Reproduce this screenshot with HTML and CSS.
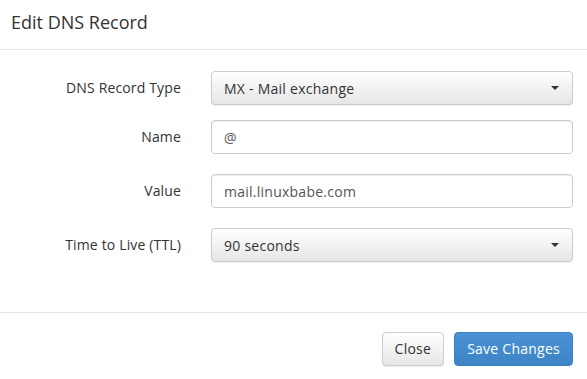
FILE: index.html
```html
<!DOCTYPE html>
<html lang="en">
<head>
  <meta charset="UTF-8">
  <meta name="viewport" content="width=device-width, initial-scale=1.0">
  <title>Edit DNS Record</title>
  <link rel="stylesheet" href="styles.css">
</head>
<body>
  <div class="modal">
    <div class="modal-header">
      <h4 class="modal-title">Edit DNS Record</h4>
    </div>

    <div class="modal-body">
      <form class="record-form">
        <div class="form-group">
          <label for="recordType">DNS Record Type</label>
          <button type="button" id="recordType" class="select-btn">
            <span>MX - Mail exchange</span>
            <span class="caret"></span>
          </button>
        </div>
        <div class="form-group">
          <label for="recordName">Name</label>
          <input type="text" id="recordName" class="form-control" value="@">
        </div>
        <div class="form-group">
          <label for="recordValue">Value</label>
          <input type="text" id="recordValue" class="form-control" value="mail.linuxbabe.com">
        </div>
        <div class="form-group">
          <label for="recordTtl">Time to Live (TTL)</label>
          <button type="button" id="recordTtl" class="select-btn">
            <span>90 seconds</span>
            <span class="caret"></span>
          </button>
        </div>
      </form>
    </div>

    <div class="modal-footer">
      <button type="button" class="btn btn-default">Close</button>
      <button type="button" class="btn btn-primary">Save Changes</button>
    </div>
  </div>
</body>
</html>
```

FILE: styles.css
```css
* {
  box-sizing: border-box;
}

body {
  font-family: "Open Sans", "Liberation Sans", sans-serif;
  font-size: 14px;
  color: #333;
  margin: 0;
  padding: 0;
  background-color: #fff;
}

.modal {
  width: 587px;
  height: 379px;
  background-color: #fff;
}

.modal-header {
  padding: 9px 11px 14px;
  border-bottom: 1px solid #e5e5e5;
}

.modal-title {
  margin: 0;
  font-size: 18px;
  font-weight: 400;
  line-height: 26px;
  color: #333;
}

.modal-body {
  padding: 21px 14px 50px 0;
}

.form-group {
  display: grid;
  grid-template-columns: 181px 1fr;
  column-gap: 30px;
  align-items: center;
  margin-bottom: 20px;
}

.form-group:first-child {
  margin-bottom: 15px;
}

.form-group:last-child {
  margin-bottom: 0;
}

.form-group label {
  text-align: right;
  font-size: 14px;
  line-height: 34px;
  letter-spacing: 0.15px;
  color: #333;
}

.form-control,
.select-btn {
  height: 34px;
  width: 100%;
  padding: 6px 12px;
  font-family: inherit;
  font-size: 14px;
  letter-spacing: 0.25px;
  border: 1px solid #ccc;
  border-radius: 4px;
}

.form-control {
  color: #555;
  background-color: #fff;
  box-shadow: inset 0 1px 1px rgba(0, 0, 0, 0.075);
}

.select-btn {
  display: flex;
  align-items: center;
  justify-content: space-between;
  color: #333;
  text-align: left;
  background-image: linear-gradient(to bottom, #fff 0, #e6e6e6 100%);
  box-shadow: inset 0 1px 0 rgba(255, 255, 255, 0.15), 0 1px 1px rgba(0, 0, 0, 0.075);
  cursor: pointer;
}

.caret {
  width: 0;
  height: 0;
  margin-right: 1px;
  border-top: 4px solid #333;
  border-left: 4px solid transparent;
  border-right: 4px solid transparent;
}

.modal-footer {
  display: flex;
  justify-content: flex-end;
  gap: 10px;
  padding: 19px 14px 0;
  border-top: 1px solid #e5e5e5;
}

.btn {
  height: 34px;
  padding: 6px 12px;
  font-family: inherit;
  font-size: 14px;
  line-height: 20px;
  letter-spacing: 0.25px;
  border: 1px solid transparent;
  border-radius: 4px;
  cursor: pointer;
}

.btn-default {
  color: #333;
  border-color: #ccc;
  background-image: linear-gradient(to bottom, #fff 0, #e6e6e6 100%);
  box-shadow: 0 1px 1px rgba(0, 0, 0, 0.075);
}

.btn-primary {
  color: #fff;
  border-color: #3a80c0;
  background-image: linear-gradient(to bottom, #4a92d3 0, #3c84c5 100%);
}
```
